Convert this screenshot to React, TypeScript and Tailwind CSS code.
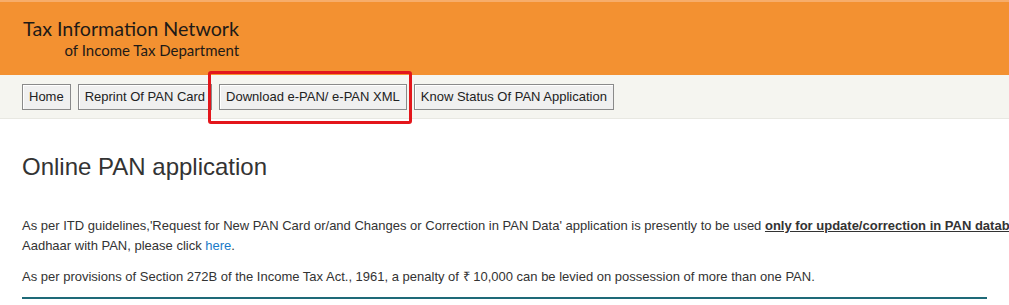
const NAV_ITEMS = ["Home", "Reprint Of PAN Card", "Download e-PAN/ e-PAN XML", "Know Status Of PAN Application"];

function NavButton({ label, highlighted }: { label: string; highlighted?: boolean }) {
  return (
    <div className="relative">
      <button
        type="button"
        className="h-[26px] border border-[#8a8a8a] bg-[#f0f0f0] px-[6px] text-[13px] leading-none text-[#222] shadow-[inset_1px_1px_0_#fff]"
      >
        {label}
      </button>
      {highlighted ? (
        <div className="pointer-events-none absolute -left-[11px] -right-[5px] -top-[13px] -bottom-[14px] rounded-[3px] border-[3px] border-[#e3161b]" />
      ) : null}
    </div>
  );
}

export default function App() {
  return (
    <div className="min-h-[305px] w-[1009px] overflow-hidden bg-white font-['Liberation_Sans',Arial,sans-serif] text-[#333]">
      <header className="h-[75px] border-t-[2px] border-[#f7ad6a] bg-[#f39131] pl-[23px] pt-[15px]">
        <div className="inline-flex flex-col items-end font-['Lato','Open_Sans',sans-serif] text-[#1e1a17]">
          <div className="text-[19.7px] leading-[24px]">Tax Information Network</div>
          <div className="text-[15px] leading-[18px]">of Income Tax Department</div>
        </div>
      </header>

      <nav className="flex h-[44px] items-center gap-[7px] border-b border-[#e8e8e2] bg-[#f5f5f0] px-[22px]">
        {NAV_ITEMS.map((item, index) => (
          <NavButton key={item} label={item} highlighted={index === 2} />
        ))}
      </nav>

      <main className="px-[22px]">
        <h1 className="pt-[33px] text-[24px] leading-[30px] text-[#333]">Online PAN application</h1>

        <p className="mt-[34px] whitespace-nowrap text-[13px] leading-[20px]">
          As per ITD guidelines,'Request for New PAN Card or/and Changes or Correction in PAN Data' application is presently to
          be used <span className="font-bold underline">only for update/correction in PAN database.</span> For linking of
          <br />
          Aadhaar with PAN, please click <a className="text-[#1a7ac8]">here</a>.
        </p>

        <p className="mt-[11px] text-[13px] leading-[20px]">
          As per provisions of Section 272B of the Income Tax Act., 1961, a penalty of ₹ 10,000 can be levied on possession of
          more than one PAN.
        </p>

        <div className="mt-[10px] h-[2px] bg-[#1e6a78]" />
      </main>
    </div>
  );
}
